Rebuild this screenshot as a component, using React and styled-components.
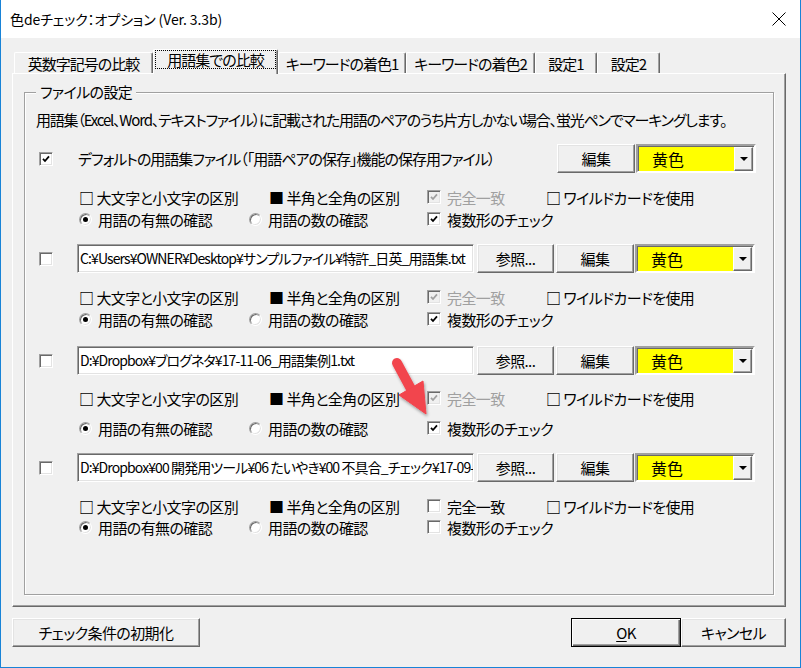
import React from 'react';
import styled, { createGlobalStyle } from 'styled-components';

const FONT = `"Noto Sans CJK JP", "Noto Sans", sans-serif`;

const GlobalStyle = createGlobalStyle`
  html, body {
    margin: 0;
    padding: 0;
    background: #fff;
  }
  body {
    font-family: ${FONT};
  }
  * {
    box-sizing: border-box;
  }
`;

const Window = styled.div`
  position: relative;
  width: 801px;
  height: 668px;
  border: 1px solid #1883d7;
  border-top: none;
  display: flex;
  flex-direction: column;
  font-family: ${FONT};
  font-feature-settings: "palt";
  color: #000;
  background: #f0f0f0;
`;

const TitleBar = styled.div`
  flex: none;
  height: 38px;
  background: #fff;
  display: flex;
  align-items: center;
  justify-content: space-between;
  padding: 0 14px 0 9px;
  font-size: 14px;
  letter-spacing: -0.1px;
`;

const Body = styled.div`
  flex: 1;
  display: flex;
  flex-direction: column;
  padding: 11px 14px 20px 11px;
`;

const TabStrip = styled.div`
  display: flex;
  align-items: flex-end;
  height: 24px;
  padding-left: 2px;
  position: relative;
  z-index: 1;
`;

const Tab = styled.div`
  width: ${p => p.$w}px;
  height: ${p => (p.$active ? 25 : 21)}px;
  margin-bottom: ${p => (p.$active ? -1 : 0)}px;
  border-top: 1px solid #fff;
  border-left: 1px solid #fff;
  border-right: 1px solid #696969;
  box-shadow: inset -1px 0 #a0a0a0;
  border-radius: 2px 2px 0 0;
  background: #f0f0f0;
  display: flex;
  align-items: stretch;
  padding: ${p => (p.$active ? '0 1px 5px 1px' : '0')};
  font-size: 15px;
  letter-spacing: -1px;
`;

const TabLabel = styled.span`
  flex: 1;
  display: flex;
  align-items: center;
  justify-content: center;
  border: 1px dotted ${p => (p.$focus ? '#000' : 'transparent')};
  white-space: nowrap;
`;

const Panel = styled.div`
  flex: none;
  height: 534px;
  border-top: 1px solid #fff;
  border-left: 1px solid #fff;
  border-right: 1px solid #696969;
  border-bottom: 1px solid #696969;
  box-shadow: inset -1px -1px #a0a0a0;
  padding: 18px 11px 11px 11px;
  display: flex;
  flex-direction: column;
`;

const Group = styled.div`
  position: relative;
  flex: 1;
  border: 1px solid #a0a0a0;
  box-shadow: 1px 1px 0 #fff, inset 1px 1px 0 #fff;
  padding: 17px 17px 0 14px;
  display: flex;
  flex-direction: column;
`;

const Legend = styled.span`
  position: absolute;
  top: -11px;
  left: 11px;
  padding: 0 4px;
  background: #f0f0f0;
  font-size: 15px;
  line-height: 20px;
  letter-spacing: -0.6px;
`;

const Desc = styled.div`
  margin-left: -3px;
  font-size: 15px;
  line-height: 20px;
  letter-spacing: -1.2px;
  white-space: nowrap;
`;

const FileRow = styled.div`
  display: flex;
  align-items: center;
  height: 29px;
  margin-top: ${p => p.$mt}px;
`;

const FileLabel = styled.span`
  margin-left: 25px;
  font-size: 15px;
  letter-spacing: -1px;
  white-space: nowrap;
`;

const PathField = styled.div`
  width: 397px;
  height: 29px;
  margin-left: 24px;
  border: 1px solid;
  border-color: #a0a0a0 #fff #fff #a0a0a0;
  box-shadow: inset 1px 1px #696969, inset -1px -1px #e3e3e3;
  background: #fff;
  padding-left: 2px;
  font-size: 14px;
  letter-spacing: -0.9px;
  line-height: 27px;
  white-space: nowrap;
  overflow: hidden;
`;

const Button = styled.button`
  width: ${p => p.$w}px;
  height: 29px;
  margin-left: ${p => (p.$auto ? 'auto' : `${p.$ml || 0}px`)};
  padding: 0;
  border: 1px solid;
  border-color: ${p => (p.$default ? '#000' : '#fff #696969 #696969 #fff')};
  box-shadow: ${p =>
    p.$default
      ? 'inset 1px 1px #fff, inset -1px -1px #696969, inset -2px -2px #a0a0a0'
      : 'inset -1px -1px #a0a0a0, inset 1px 1px #e3e3e3'};
  background: #f0f0f0;
  color: #000;
  font-family: ${FONT};
  font-feature-settings: "palt";
  font-size: 15px;
  letter-spacing: -0.6px;
  cursor: default;

  u {
    text-decoration-thickness: 1px;
    text-underline-offset: 2px;
  }
`;

const Combo = styled.div`
  width: 120px;
  height: 29px;
  margin-left: 1px;
  border: 2px solid;
  border-color: #a0a0a0 #fff #fff #a0a0a0;
  box-shadow: inset 1px 1px #696969;
  padding: 1px 1px 0 1px;
  display: flex;
`;

const ComboValue = styled.span`
  flex: 1;
  background: #ff0;
  padding-left: 13px;
  font-size: 16px;
  display: flex;
  align-items: center;
`;

const DropButton = styled.span`
  width: 19px;
  border: 1px solid;
  border-color: #fff #696969 #696969 #fff;
  box-shadow: inset -1px -1px #a0a0a0;
  background: #f0f0f0;
  display: flex;
  align-items: center;
  justify-content: center;
`;

const OptionRow = styled.div`
  display: grid;
  grid-template-columns: ${p => p.$cols};
  align-items: center;
  height: 22px;
  margin-left: 40px;
  margin-top: ${p => p.$mt || 0}px;
  font-size: 15px;
  letter-spacing: -0.6px;
  white-space: nowrap;
`;

const Option = styled.span`
  display: flex;
  align-items: center;
  gap: ${p => (p.$mark ? 3 : 6)}px;
  color: ${p => (p.$disabled ? '#a0a0a0' : '#000')};
`;

// the □ / ■ marks are plain text glyphs in the original dialog
const Mark = styled.span`
  font-weight: 700;
`;

const Box = styled.span`
  flex: none;
  width: 14px;
  height: 14px;
  border: 1px solid;
  border-color: #a0a0a0 #fff #fff #a0a0a0;
  box-shadow: inset 1px 1px #696969, inset -1px -1px #e3e3e3;
  background: ${p => (p.$disabled ? '#f0f0f0' : '#fff')};
  display: flex;
  align-items: center;
  justify-content: center;
`;

const RadioDot = styled.span`
  flex: none;
  width: 13px;
  height: 13px;
  border-radius: 50%;
  border: 1px solid;
  border-color: #a0a0a0 #fff #fff #a0a0a0;
  box-shadow: inset 1px 1px #696969, inset -1px -1px #e3e3e3;
  background: #fff;
  display: flex;
  align-items: center;
  justify-content: center;

  &::after {
    content: '';
    display: ${p => (p.$on ? 'block' : 'none')};
    width: 5px;
    height: 5px;
    border-radius: 50%;
    background: #000;
  }
`;

const ButtonRow = styled.div`
  display: flex;
  margin-top: 11px;
`;

const Arrow = styled.svg`
  position: absolute;
  left: 384px;
  top: 355px;
  pointer-events: none;
`;

const CheckBox = ({ on, disabled }) => (
  <Box $disabled={disabled}>
    {on && (
      <svg width="8" height="8" viewBox="0 0 8 8">
        <polyline points="1,3.8 3,6 7,1.4" fill="none" stroke={disabled ? '#a0a0a0' : '#000'} strokeWidth="1.8" />
      </svg>
    )}
  </Box>
);

const ColorCombo = () => (
  <Combo>
    <ComboValue>黄色</ComboValue>
    <DropButton>
      <svg width="8" height="4" viewBox="0 0 8 4">
        <polygon points="0,0 8,0 4,4" fill="#000" />
      </svg>
    </DropButton>
  </Combo>
);

const tabs = [
  { label: '英数字記号の比較', w: 139 },
  { label: '用語集での比較', w: 125, active: true },
  { label: 'キーワードの着色1', w: 128 },
  { label: 'キーワードの着色2', w: 129 },
  { label: '設定1', w: 62 },
  { label: '設定2', w: 63 },
];

const files = [
  {
    checked: true,
    label: 'デフォルトの用語集ファイル（「用語ペアの保存」機能の保存用ファイル）',
    exact: 'disabled', plural: true,
    mt: [14, 13, 0],
  },
  {
    path: 'C:¥Users¥OWNER¥Desktop¥サンプルファイル¥特許_日英_用語集.txt',
    exact: 'disabled', plural: true,
    mt: [14, 13, 0],
  },
  {
    path: 'D:¥Dropbox¥ブログネタ¥17-11-06_用語集例1.txt',
    exact: 'disabled', plural: true,
    mt: [16, 12, 8],
  },
  {
    path: 'D:¥Dropbox¥00 開発用ツール¥06 たいやき¥00 不具合_チェック¥17-09-07_テスト用.txt',
    exact: 'off', plural: false,
    mt: [14, 13, -1],
  },
];

const FileBlock = ({ file }) => (
  <>
    <FileRow $mt={file.mt[0]}>
      <CheckBox on={file.checked} />
      {file.path ? (
        <>
          <PathField>{file.path}</PathField>
          <Button $w={77} $ml={3}>参照...</Button>
          <Button $w={78} $ml={2}>編集</Button>
        </>
      ) : (
        <>
          <FileLabel>{file.label}</FileLabel>
          <Button $w={78} $auto>編集</Button>
        </>
      )}
      <ColorCombo />
    </FileRow>
    <OptionRow $cols="190px 158px 119px auto" $mt={file.mt[1]}>
      <Option $mark><Mark>□</Mark>大文字と小文字の区別</Option>
      <Option $mark><Mark>■</Mark>半角と全角の区別</Option>
      <Option $disabled={file.exact === 'disabled'}>
        <CheckBox on={file.exact === 'disabled'} disabled={file.exact === 'disabled'} />
        完全一致
      </Option>
      <Option $mark><Mark>□</Mark>ワイルドカードを使用</Option>
    </OptionRow>
    <OptionRow $cols="170px 178px auto" $mt={file.mt[2]}>
      <Option><RadioDot $on />用語の有無の確認</Option>
      <Option><RadioDot />用語の数の確認</Option>
      <Option><CheckBox on={file.plural} />複数形のチェック</Option>
    </OptionRow>
  </>
);

export default function App() {
  return (
    <>
      <GlobalStyle />
      <Window>
        <TitleBar>
          <span>色deチェック：オプション (Ver. 3.3b)</span>
          <svg width="14" height="14" viewBox="0 0 14 14">
            <path d="M0.5 0.5 L13.5 13.5 M13.5 0.5 L0.5 13.5" stroke="#000" strokeWidth="1" />
          </svg>
        </TitleBar>
        <Body>
          <TabStrip>
            {tabs.map(t => (
              <Tab key={t.label} $w={t.w} $active={t.active}>
                <TabLabel $focus={t.active}>{t.label}</TabLabel>
              </Tab>
            ))}
          </TabStrip>
          <Panel>
            <Group>
              <Legend>ファイルの設定</Legend>
              <Desc>
                用語集（Excel、Word、テキストファイル）に記載された用語のペアのうち片方しかない場合、蛍光ペンでマーキングします。
              </Desc>
              {files.map((f, i) => (
                <FileBlock key={i} file={f} />
              ))}
            </Group>
          </Panel>
          <ButtonRow>
            <Button $w={188}>チェック条件の初期化</Button>
            <Button $w={110} $auto $default><u>O</u>K</Button>
            <Button $w={105}>キャンセル</Button>
          </ButtonRow>
        </Body>
        {/* red annotation arrow */}
        <Arrow width="50" height="66" viewBox="0 0 50 66">
          <defs>
            <filter id="sh" x="-30%" y="-30%" width="160%" height="160%">
              <feDropShadow dx="1" dy="2" stdDeviation="1.5" floodOpacity="0.35" />
            </filter>
          </defs>
          <g filter="url(#sh)" fill="#f2444d" stroke="#f2444d">
            <line x1="12" y1="8" x2="26" y2="34" strokeWidth="10" strokeLinecap="round" />
            <polygon points="14,40 38,26 41,59" strokeWidth="1" strokeLinejoin="round" />
          </g>
        </Arrow>
      </Window>
    </>
  );
}
